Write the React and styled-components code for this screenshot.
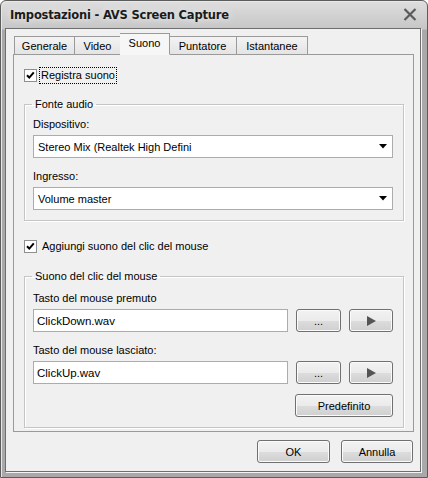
import React from 'react';
import styled, { createGlobalStyle } from 'styled-components';

const GlobalStyle = createGlobalStyle`
  html, body {
    margin: 0;
    padding: 0;
    background: #ffffff;
  }
  body {
    font-family: "Liberation Sans", Arial, sans-serif;
    font-size: 11px;
    color: #000;
  }
`;

const tabs = [
  { label: 'Generale', w: 61 },
  { label: 'Video', w: 46 },
  { label: 'Suono', w: 48 },
  { label: 'Puntatore', w: 68 },
  { label: 'Istantanee', w: 71 },
];

const Checkbox = ({ checked }) => (
  <Box>
    {checked && (
      <svg width="11" height="11" viewBox="0 0 11 11">
        <path d="M2 5.2 L4.3 7.6 L8.8 2.4" fill="none" stroke="#000" strokeWidth="2" />
      </svg>
    )}
  </Box>
);

const Combo = ({ value }) => (
  <ComboBox>
    <span>{value}</span>
    <svg width="8" height="5" viewBox="0 0 8 5">
      <path d="M0 0 H8 L4 4.5 Z" fill="#000" />
    </svg>
  </ComboBox>
);

const FileRow = ({ value }) => (
  <Row>
    <TextInput>{value}</TextInput>
    <Button $w={45}>...</Button>
    <Button $w={44}>
      <svg width="9" height="10" viewBox="0 0 9 10">
        <path d="M0 0 L9 5 L0 10 Z" fill="#555" />
      </svg>
    </Button>
  </Row>
);

const App = () => {
  return (
    <>
      <GlobalStyle />
      <Window>
        <TitleBar>
          <Title>Impostazioni - AVS Screen Capture</Title>
          <svg width="14" height="13" viewBox="0 0 14 13">
            <path d="M1.5 1 L12.5 12 M12.5 1 L1.5 12" stroke="#5b5b5b" strokeWidth="2.2" />
          </svg>
        </TitleBar>
        <Client>
          <TabRow>
            {tabs.map((t) => (
              <Tab key={t.label} $w={t.w} $active={t.label === 'Suono'}>{t.label}</Tab>
            ))}
          </TabRow>
          <Panel>
            <CheckRow $top={12}>
              <Checkbox checked />
              <Focus>Registra suono</Focus>
            </CheckRow>

            <Group $top={15}>
              <Legend>Fonte audio</Legend>
              <Label $top={7}>Dispositivo:</Label>
              <Combo value="Stereo Mix (Realtek High Defini" />
              <Label $top={12}>Ingresso:</Label>
              <Combo value="Volume master" />
            </Group>

            <CheckRow $top={17}>
              <Checkbox checked />
              <CheckText>Aggiungi suono del clic del mouse</CheckText>
            </CheckRow>

            <Group $top={16}>
              <Legend>Suono del clic del mouse</Legend>
              <Label $top={9}>Tasto del mouse premuto</Label>
              <FileRow value="ClickDown.wav" />
              <Label $top={12}>Tasto del mouse lasciato:</Label>
              <FileRow value="ClickUp.wav" />
              <Right>
                <Button $w={98}>Predefinito</Button>
              </Right>
            </Group>
          </Panel>
          <Footer>
            <Button $w={73}>OK</Button>
            <Button $w={72}>Annulla</Button>
          </Footer>
        </Client>
      </Window>
    </>
  );
};

const Window = styled.div`
  width: 428px;
  height: 478px;
  box-sizing: border-box;
  display: flex;
  flex-direction: column;
  padding: 0 6px 5px 4px;
  border: 1px solid #5c5c5c;
  border-radius: 6px 6px 0 0;
  background: linear-gradient(#dedede 0px, #c6c6c6 28px, #a9a9a9 29px, #a9a9a9 100%);
  box-shadow: inset 1px 1px 0 #e8e8e8;
`;

const TitleBar = styled.div`
  height: 27px;
  flex: none;
  display: flex;
  align-items: center;
  justify-content: space-between;
  padding: 0 4px 0 5px;
`;

const Title = styled.div`
  font-family: "DejaVu Sans", "Liberation Sans", sans-serif;
  font-weight: bold;
  font-size: 11.5px;
  color: #1b1b1b;
  letter-spacing: -0.2px;
  text-shadow: 0 0 6px #f2f2f2;
`;

const Client = styled.div`
  flex: 1;
  display: flex;
  flex-direction: column;
  border: 1px solid #6e6e6e;
  background: #f0f0f0;
  padding: 5px 6px 0 7px;
  box-shadow: 1px 1px 0 #f4f4f4;
`;

const TabRow = styled.div`
  display: flex;
  align-items: flex-end;
  height: 21px;
  padding-left: 1px;
  position: relative;
  z-index: 1;
  margin-bottom: -1px;
`;

const Tab = styled.div`
  box-sizing: border-box;
  width: ${(p) => p.$w + (p.$active ? 2 : 0)}px;
  height: ${(p) => (p.$active ? 22 : 19)}px;
  margin: ${(p) => (p.$active ? '0 -1px 0 -1px' : '0')};
  display: flex;
  align-items: center;
  justify-content: center;
  padding-bottom: ${(p) => (p.$active ? 3 : 0)}px;
  border: 1px solid #9a9a9a;
  border-bottom: ${(p) => (p.$active ? '1px solid #f6f6f6' : '1px solid #9a9a9a')};
  background: ${(p) =>
    p.$active ? '#f6f6f6' : 'linear-gradient(#f3f3f3, #e4e4e4)'};
  position: relative;
  z-index: ${(p) => (p.$active ? 2 : 0)};
  & + & {
    border-left: ${(p) => (p.$active ? '1px solid #9a9a9a' : 'none')};
  }
`;

const Panel = styled.div`
  height: 378px;
  box-sizing: border-box;
  border: 1px solid #9a9a9a;
  background: #f0f0f0;
  padding: 0 9px 0 10px;
  display: flex;
  flex-direction: column;
`;

const CheckRow = styled.div`
  display: flex;
  align-items: center;
  height: 16px;
  margin-top: ${(p) => p.$top}px;
`;

const Box = styled.div`
  width: 13px;
  height: 13px;
  box-sizing: border-box;
  border: 1px solid #8e8f8f;
  background: #fff;
  display: flex;
  align-items: center;
  justify-content: center;
  margin-right: 2px;
`;

const Focus = styled.span`
  border: 1px dotted #000;
  padding: 1px 1px;
  line-height: 13px;
`;

const CheckText = styled.span`
  padding-left: 3px;
  line-height: 13px;
`;

const Group = styled.fieldset`
  margin: ${(p) => p.$top}px 0 0 0;
  padding: 0 10px 10px 8px;
  border: 1px solid #c5c5c5;
  box-shadow: inset 1px 1px 0 #ffffff, 1px 1px 0 #ffffff;
  display: flex;
  flex-direction: column;
  min-width: 0;
`;

const Legend = styled.legend`
  padding: 0 3px;
  margin-left: -1px;
  line-height: 13px;
`;

const Label = styled.div`
  line-height: 13px;
  margin-top: ${(p) => p.$top}px;
  margin-bottom: 4px;
`;

const ComboBox = styled.div`
  height: 23px;
  box-sizing: border-box;
  border: 1px solid #acacac;
  background: #fff;
  display: flex;
  align-items: center;
  justify-content: space-between;
  padding: 0 5px 0 4px;
`;

const Row = styled.div`
  display: flex;
  gap: 8px;
`;

const TextInput = styled.div`
  flex: 1;
  height: 23px;
  box-sizing: border-box;
  border: 1px solid #acacac;
  background: #fff;
  display: flex;
  align-items: center;
  padding-left: 3px;
  font-size: 11.5px;
`;

const Button = styled.div`
  width: ${(p) => p.$w}px;
  height: 23px;
  box-sizing: border-box;
  border: 1px solid #707070;
  border-radius: 3px;
  background: linear-gradient(#f2f2f2 0%, #ebebeb 50%, #dddddd 51%, #cfcfcf 100%);
  box-shadow: inset 0 0 0 1px #fbfbfb;
  display: flex;
  align-items: center;
  justify-content: center;
  flex: none;
`;

const Right = styled.div`
  display: flex;
  justify-content: flex-end;
  margin-top: 10px;
`;

const Footer = styled.div`
  display: flex;
  justify-content: flex-end;
  gap: 11px;
  padding: 8px 1px 0 0;
`;

export default App;
